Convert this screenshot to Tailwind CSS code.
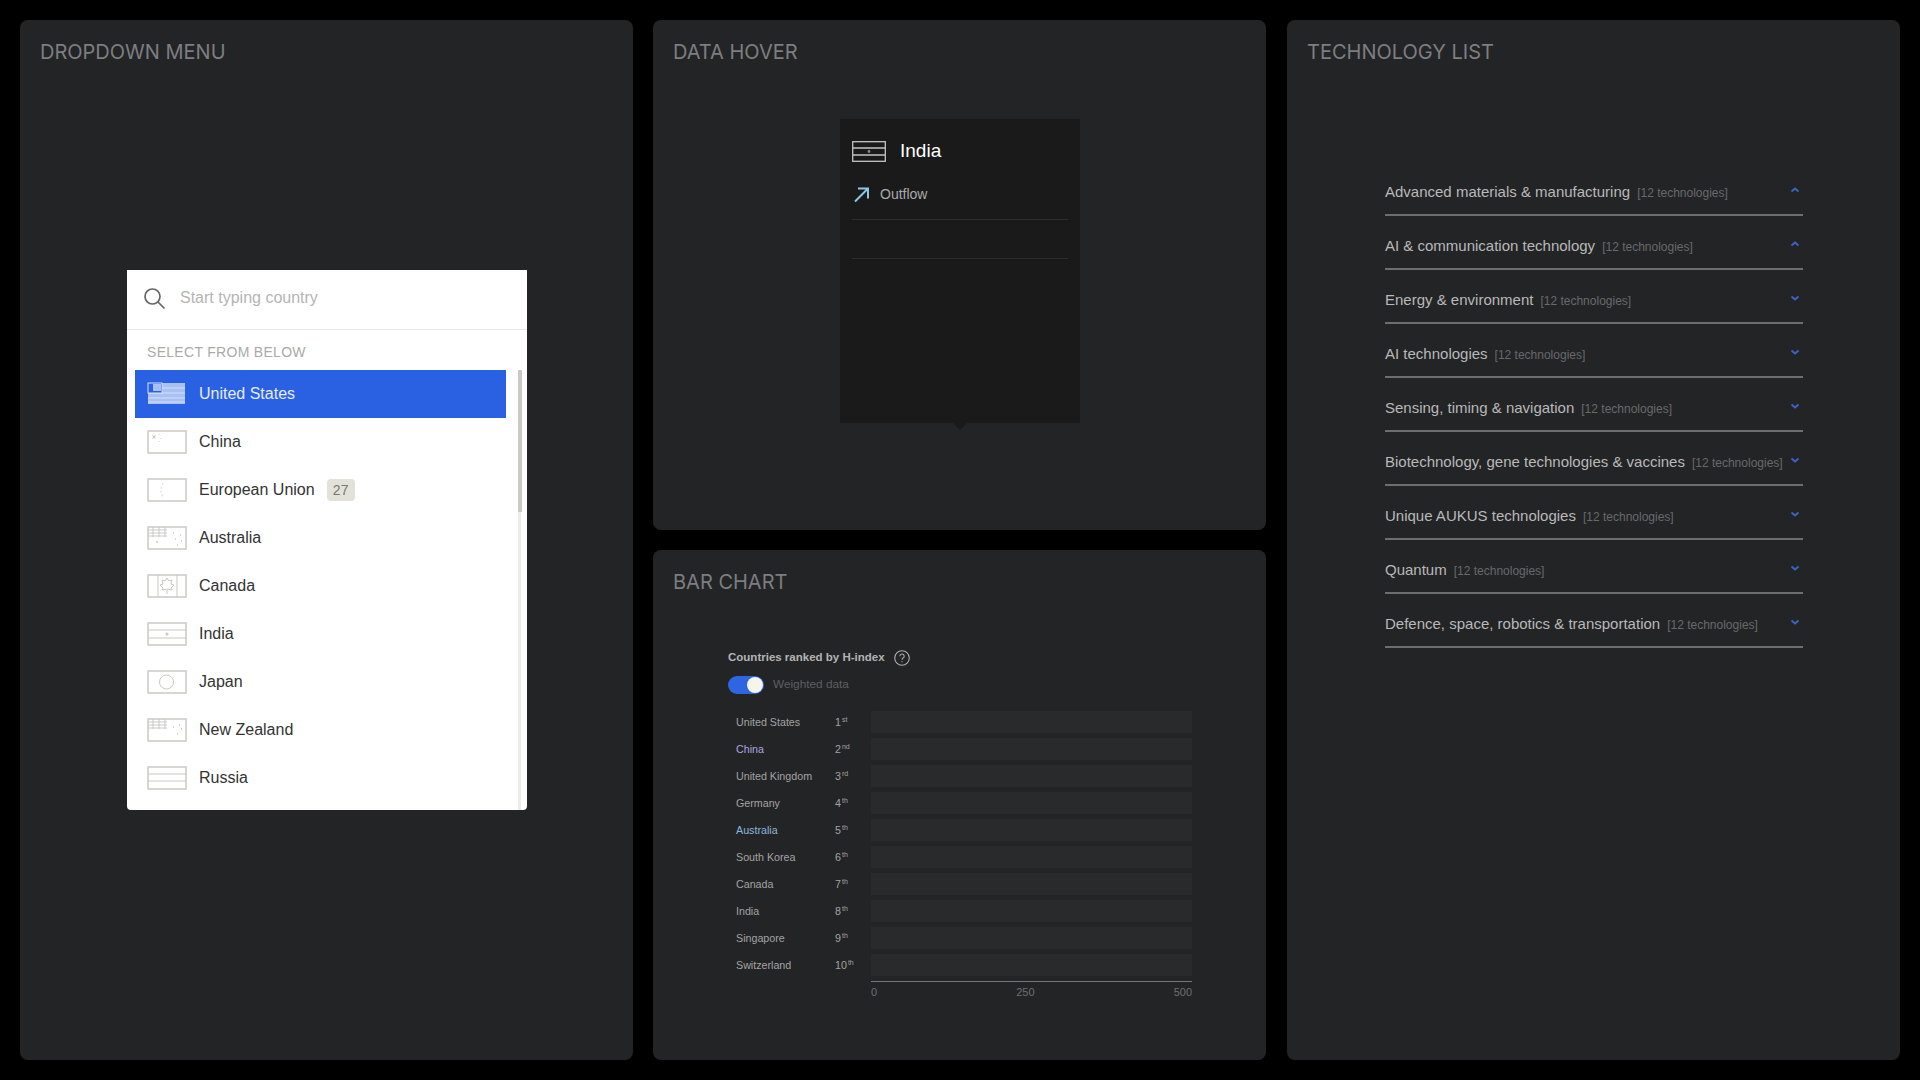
<!DOCTYPE html>
<html lang="en">
<head>
  <meta charset="UTF-8" />
  <title>Components</title>
  <script src="https://cdn.jsdelivr.net/npm/@tailwindcss/browser@4"></script>
</head>
<body class="bg-black font-['Liberation_Sans',sans-serif]">
  <div class="w-[1920px] h-[1080px] p-5 grid grid-cols-[613px_613px_614px] gap-x-[20px] overflow-hidden">

    <!-- Dropdown menu -->
    <section class="h-[1040px] rounded-lg bg-[#232426] pt-[20px] px-5">
      <h2 class="font-['Inter',sans-serif] text-[20px] leading-[24px] text-[#7d7e80]">DROPDOWN MENU</h2>
      <div class="w-[400px] h-[540px] mt-[206px] ml-[87px] bg-white rounded-b-sm overflow-hidden">
        <div class="h-[60px] flex items-center pl-[15px] pb-[4px] gap-[14px] border-b border-[#e8e8e8]">
          <svg class="w-[24px] h-[24px]" viewBox="0 0 24 24" fill="none" stroke="#666" stroke-width="1.7"><circle cx="10.5" cy="10.5" r="7.5"/><path d="M16 16l6.5 6.5"/></svg>
          <span class="text-[16px] text-[#b5b5b5]">Start typing country</span>
        </div>
        <div class="relative">
          <div class="pl-5 pt-[14px] h-[40px] text-[14px] leading-[16px] tracking-[0.3px] text-[#aaaaa8]">SELECT FROM BELOW</div>
          <div class="absolute left-[391px] top-[40px] w-[4px] h-[142px] bg-[#c9c9c5]"></div>
          <div class="absolute left-[391px] top-[182px] w-[3px] h-[298px] bg-[#ececea]"></div>
          <ul class="pl-2 w-[379px] text-[16px] text-[#333]">
            <li class="h-[48px] flex items-center pl-3 gap-3 bg-[#2a61e2] text-[#e6ecfb]">
              <svg class="w-[40px] h-[24px]" viewBox="0 0 40 24"><rect x="1" y="1" width="37" height="21" fill="#a9c0f3"/><path d="M1 6h37M1 11h37M1 16h37M1 20h37" stroke="#d5e0fa"/><rect x="1" y="1" width="14" height="10" fill="#2a61e2" stroke="#d5e0fa"/><rect x="6" y="2" width="8" height="7" fill="#a9c0f3"/></svg>
              United States
            </li>
            <li class="h-[48px] flex items-center pl-3 gap-3">
              <svg class="w-[40px] h-[24px]" viewBox="0 0 40 24" fill="none" stroke="#c9c9c5" stroke-width="1.5"><rect x="1" y="1" width="38" height="22"/><path d="M5 5l1 2-1 2 2-1 2 1-1-2 1-2-2 1z" fill="#c9c9c5" stroke="none"/><path d="M12 4v1M14 8v1M12 11v1" stroke="#ddd"/></svg>
              China
            </li>
            <li class="h-[48px] flex items-center pl-3 gap-3">
              <svg class="w-[40px] h-[24px]" viewBox="0 0 40 24" fill="none" stroke="#c9c9c5" stroke-width="1.5"><rect x="1" y="1" width="38" height="22"/><path d="M16 5c-2 4-3 9 0 14" stroke="#e4e4e4" stroke-dasharray="2 2"/></svg>
              European Union
              <span class="w-[28px] h-[22px] rounded-sm bg-[#e2e2da] text-[#77776f] text-[14px] flex items-center justify-center">27</span>
            </li>
            <li class="h-[48px] flex items-center pl-3 gap-3">
              <svg class="w-[40px] h-[24px]" viewBox="0 0 40 24" fill="none" stroke="#c9c9c5" stroke-width="1.5"><rect x="1" y="1" width="38" height="22"/><path d="M1 4h19M1 7h19M1 10h19M6 1v10M12 1v10M18 1v10" stroke-width="1"/><path d="M9 16h2M26 7h1M33 9h1M28 13h1M34 15h1M30 19h1" stroke-width="1.5"/></svg>
              Australia
            </li>
            <li class="h-[48px] flex items-center pl-3 gap-3">
              <svg class="w-[40px] h-[24px]" viewBox="0 0 40 24" fill="none" stroke="#c9c9c5" stroke-width="1.5"><rect x="1" y="1" width="38" height="22"/><path d="M11 1v22M30 1v22" stroke-width="1"/><path d="M20 4l2 3 3-1-1 4 3 1-3 3 1 2-5-1-5 1 1-2-3-3 3-1-1-4 3 1zM20 16v4" stroke-width="1"/></svg>
              Canada
            </li>
            <li class="h-[48px] flex items-center pl-3 gap-3">
              <svg class="w-[40px] h-[24px]" viewBox="0 0 40 24" fill="none" stroke="#c9c9c5" stroke-width="1.5"><rect x="1" y="1" width="38" height="22"/><path d="M1 8h38M1 16h38" stroke-width="1"/><circle cx="20" cy="12" r="1.5" fill="#c9c9c5" stroke="none"/></svg>
              India
            </li>
            <li class="h-[48px] flex items-center pl-3 gap-3">
              <svg class="w-[40px] h-[24px]" viewBox="0 0 40 24" fill="none" stroke="#c9c9c5" stroke-width="1.5"><rect x="1" y="1" width="38" height="22"/><circle cx="19.5" cy="12" r="7" stroke-width="1"/></svg>
              Japan
            </li>
            <li class="h-[48px] flex items-center pl-3 gap-3">
              <svg class="w-[40px] h-[24px]" viewBox="0 0 40 24" fill="none" stroke="#c9c9c5" stroke-width="1.5"><rect x="1" y="1" width="38" height="22"/><path d="M1 4h19M1 7h19M1 10h19M6 1v10M12 1v10M18 1v10" stroke-width="1"/><path d="M26 9h1M32 7h1M34 11h1M30 16h1" stroke-width="1.5"/></svg>
              New Zealand
            </li>
            <li class="h-[48px] flex items-center pl-3 gap-3">
              <svg class="w-[40px] h-[24px]" viewBox="0 0 40 24" fill="none" stroke="#c9c9c5" stroke-width="1.5"><rect x="1" y="1" width="38" height="22"/><path d="M1 8h38M1 15h38" stroke-width="1"/></svg>
              Russia
            </li>
          </ul>
        </div>
      </div>
    </section>

    <div class="flex flex-col gap-5">
      <!-- Data hover -->
      <section class="h-[510px] rounded-lg bg-[#232426] pt-[20px] px-5">
        <h2 class="font-['Inter',sans-serif] text-[20px] leading-[24px] text-[#7d7e80]">DATA HOVER</h2>
        <div class="relative w-[240px] h-[304px] mt-[55px] ml-[167px] bg-[#1a1a1b] px-3">
          <div class="flex items-center gap-[15px] pt-[16px] h-[48px]">
            <svg class="w-[34px] h-[21px]" viewBox="0 0 34 21" fill="none" stroke="#c4c4c4" stroke-width="1.3"><rect x="0.7" y="0.7" width="32.6" height="19.6"/><path d="M1 7h32M1 14h32"/><circle cx="17" cy="10.5" r="1.4" fill="#888" stroke="none"/></svg>
            <span class="text-[19px] text-white -ml-[1px]">India</span>
          </div>
          <div class="flex items-center gap-[10px] h-[50px] mt-[3px] border-b border-[#2c2c2e] text-[14px] text-[#aaaaaa]">
            <svg class="w-[17px] h-[17px] ml-[1px]" viewBox="0 0 17 17" fill="none" stroke="#8fc6e6" stroke-width="2"><path d="M2 15.5L15 2.5M5 2.5h10v10"/></svg>
            Outflow
          </div>
          <div class="h-[39px] border-b border-[#2c2c2e]"></div>
          <div class="absolute left-[113px] -bottom-[7px] w-0 h-0 border-x-[7px] border-x-transparent border-t-[7px] border-t-[#1a1a1b]"></div>
        </div>
      </section>

      <!-- Bar chart -->
      <section class="h-[510px] rounded-lg bg-[#232426] pt-[20px] px-5">
        <h2 class="font-['Inter',sans-serif] text-[20px] leading-[24px] text-[#7d7e80]">BAR CHART</h2>
        <div class="ml-[55px] mt-[54px] flex items-center gap-[9px] h-[20px]">
          <span class="text-[11.5px] font-bold text-[#b4b4b4]">Countries ranked by H-index</span>
          <svg class="w-[16px] h-[16px]" viewBox="0 0 16 16" fill="none" stroke="#b0b0b0" stroke-width="1.1"><circle cx="8" cy="8" r="7.3"/><path d="M5.8 6.2a2.2 2.2 0 1 1 3.3 1.9c-.7.4-1.1.8-1.1 1.7M8 11.2v1"/></svg>
        </div>
        <div class="ml-[55px] mt-[7px] flex items-center gap-[9px] h-[20px]">
          <div class="w-[36px] h-[18px] rounded-full bg-[#2f65e0] flex items-center justify-end pr-[1px]"><div class="w-[16px] h-[16px] rounded-full bg-[#f5f5ee]"></div></div>
          <span class="text-[11.8px] text-[#5e5f61]">Weighted data</span>
        </div>
        <div class="ml-[63px] mt-[16px] w-[458px] text-[10.7px] text-[#a3a3a3] flex flex-col gap-[5px]">
          <div class="flex items-center h-[22px]"><span class="w-[99px]">United States</span><span class="w-[36px]">1<sup class="text-[7px] ml-[1px]">st</sup></span><div class="w-[321px] h-[22px] bg-[#292a2c]"></div></div>
          <div class="flex items-center h-[22px]"><span class="w-[99px] text-[#a9a6e0]">China</span><span class="w-[36px]">2<sup class="text-[7px] ml-[1px]">nd</sup></span><div class="w-[321px] h-[22px] bg-[#292a2c]"></div></div>
          <div class="flex items-center h-[22px]"><span class="w-[99px]">United Kingdom</span><span class="w-[36px]">3<sup class="text-[7px] ml-[1px]">rd</sup></span><div class="w-[321px] h-[22px] bg-[#292a2c]"></div></div>
          <div class="flex items-center h-[22px]"><span class="w-[99px]">Germany</span><span class="w-[36px]">4<sup class="text-[7px] ml-[1px]">th</sup></span><div class="w-[321px] h-[22px] bg-[#292a2c]"></div></div>
          <div class="flex items-center h-[22px]"><span class="w-[99px] text-[#8fb4dc]">Australia</span><span class="w-[36px]">5<sup class="text-[7px] ml-[1px]">th</sup></span><div class="w-[321px] h-[22px] bg-[#292a2c]"></div></div>
          <div class="flex items-center h-[22px]"><span class="w-[99px]">South Korea</span><span class="w-[36px]">6<sup class="text-[7px] ml-[1px]">th</sup></span><div class="w-[321px] h-[22px] bg-[#292a2c]"></div></div>
          <div class="flex items-center h-[22px]"><span class="w-[99px]">Canada</span><span class="w-[36px]">7<sup class="text-[7px] ml-[1px]">th</sup></span><div class="w-[321px] h-[22px] bg-[#292a2c]"></div></div>
          <div class="flex items-center h-[22px]"><span class="w-[99px]">India</span><span class="w-[36px]">8<sup class="text-[7px] ml-[1px]">th</sup></span><div class="w-[321px] h-[22px] bg-[#292a2c]"></div></div>
          <div class="flex items-center h-[22px]"><span class="w-[99px]">Singapore</span><span class="w-[36px]">9<sup class="text-[7px] ml-[1px]">th</sup></span><div class="w-[321px] h-[22px] bg-[#292a2c]"></div></div>
          <div class="flex items-center h-[22px]"><span class="w-[99px]">Switzerland</span><span class="w-[36px]">10<sup class="text-[7px] ml-[1px]">th</sup></span><div class="w-[321px] h-[22px] bg-[#292a2c]"></div></div>
        </div>
        <div class="ml-[198px] mt-[5px] w-[321px] border-t border-[#77787a] pt-[2px] flex justify-between text-[11px] text-[#6e6f71]">
          <span>0</span><span>250</span><span>500</span>
        </div>
      </section>
    </div>

    <!-- Technology list -->
    <section class="h-[1040px] rounded-lg bg-[#232426] pt-[20px] px-5 ml-[1px]">
      <h2 class="font-['Inter',sans-serif] text-[20px] leading-[24px] text-[#7d7e80]">TECHNOLOGY LIST</h2>
      <ul class="ml-[78px] mt-[109px] w-[418px] text-[15px] text-[#b9b9b9]">
        <li class="h-[54px] pt-[8px]"><div class="h-[33px] flex items-start justify-between border-b-2 border-[#6d6e70] box-content"><span class="flex items-baseline gap-[7px]">Advanced materials &amp; manufacturing <span class="text-[12px] text-[#68696b]">[12 technologies]</span></span><svg class="w-[12px] h-[12px] mr-[2px] mt-[3px]" viewBox="0 0 12 12" fill="none" stroke="#3a63c8" stroke-width="2"><path d="M2.5 7.5l3.5-3 3.5 3"/></svg></div></li>
        <li class="h-[54px] pt-[8px]"><div class="h-[33px] flex items-start justify-between border-b-2 border-[#6d6e70] box-content"><span class="flex items-baseline gap-[7px]">AI &amp; communication technology <span class="text-[12px] text-[#68696b]">[12 technologies]</span></span><svg class="w-[12px] h-[12px] mr-[2px] mt-[3px]" viewBox="0 0 12 12" fill="none" stroke="#3a63c8" stroke-width="2"><path d="M2.5 7.5l3.5-3 3.5 3"/></svg></div></li>
        <li class="h-[54px] pt-[8px]"><div class="h-[33px] flex items-start justify-between border-b-2 border-[#6d6e70] box-content"><span class="flex items-baseline gap-[7px]">Energy &amp; environment <span class="text-[12px] text-[#68696b]">[12 technologies]</span></span><svg class="w-[12px] h-[12px] mr-[2px] mt-[3px]" viewBox="0 0 12 12" fill="none" stroke="#3a63c8" stroke-width="2"><path d="M2.5 4.5l3.5 3 3.5-3"/></svg></div></li>
        <li class="h-[54px] pt-[8px]"><div class="h-[33px] flex items-start justify-between border-b-2 border-[#6d6e70] box-content"><span class="flex items-baseline gap-[7px]">AI technologies <span class="text-[12px] text-[#68696b]">[12 technologies]</span></span><svg class="w-[12px] h-[12px] mr-[2px] mt-[3px]" viewBox="0 0 12 12" fill="none" stroke="#3a63c8" stroke-width="2"><path d="M2.5 4.5l3.5 3 3.5-3"/></svg></div></li>
        <li class="h-[54px] pt-[8px]"><div class="h-[33px] flex items-start justify-between border-b-2 border-[#6d6e70] box-content"><span class="flex items-baseline gap-[7px]">Sensing, timing &amp; navigation <span class="text-[12px] text-[#68696b]">[12 technologies]</span></span><svg class="w-[12px] h-[12px] mr-[2px] mt-[3px]" viewBox="0 0 12 12" fill="none" stroke="#3a63c8" stroke-width="2"><path d="M2.5 4.5l3.5 3 3.5-3"/></svg></div></li>
        <li class="h-[54px] pt-[8px]"><div class="h-[33px] flex items-start justify-between border-b-2 border-[#6d6e70] box-content"><span class="flex items-baseline gap-[7px]">Biotechnology, gene technologies &amp; vaccines <span class="text-[12px] text-[#68696b]">[12 technologies]</span></span><svg class="w-[12px] h-[12px] mr-[2px] mt-[3px]" viewBox="0 0 12 12" fill="none" stroke="#3a63c8" stroke-width="2"><path d="M2.5 4.5l3.5 3 3.5-3"/></svg></div></li>
        <li class="h-[54px] pt-[8px]"><div class="h-[33px] flex items-start justify-between border-b-2 border-[#6d6e70] box-content"><span class="flex items-baseline gap-[7px]">Unique AUKUS technologies <span class="text-[12px] text-[#68696b]">[12 technologies]</span></span><svg class="w-[12px] h-[12px] mr-[2px] mt-[3px]" viewBox="0 0 12 12" fill="none" stroke="#3a63c8" stroke-width="2"><path d="M2.5 4.5l3.5 3 3.5-3"/></svg></div></li>
        <li class="h-[54px] pt-[8px]"><div class="h-[33px] flex items-start justify-between border-b-2 border-[#6d6e70] box-content"><span class="flex items-baseline gap-[7px]">Quantum <span class="text-[12px] text-[#68696b]">[12 technologies]</span></span><svg class="w-[12px] h-[12px] mr-[2px] mt-[3px]" viewBox="0 0 12 12" fill="none" stroke="#3a63c8" stroke-width="2"><path d="M2.5 4.5l3.5 3 3.5-3"/></svg></div></li>
        <li class="h-[54px] pt-[8px]"><div class="h-[33px] flex items-start justify-between border-b-2 border-[#6d6e70] box-content"><span class="flex items-baseline gap-[7px]">Defence, space, robotics &amp; transportation <span class="text-[12px] text-[#68696b]">[12 technologies]</span></span><svg class="w-[12px] h-[12px] mr-[2px] mt-[3px]" viewBox="0 0 12 12" fill="none" stroke="#3a63c8" stroke-width="2"><path d="M2.5 4.5l3.5 3 3.5-3"/></svg></div></li>
      </ul>
    </section>
  </div>
</body>
</html>
